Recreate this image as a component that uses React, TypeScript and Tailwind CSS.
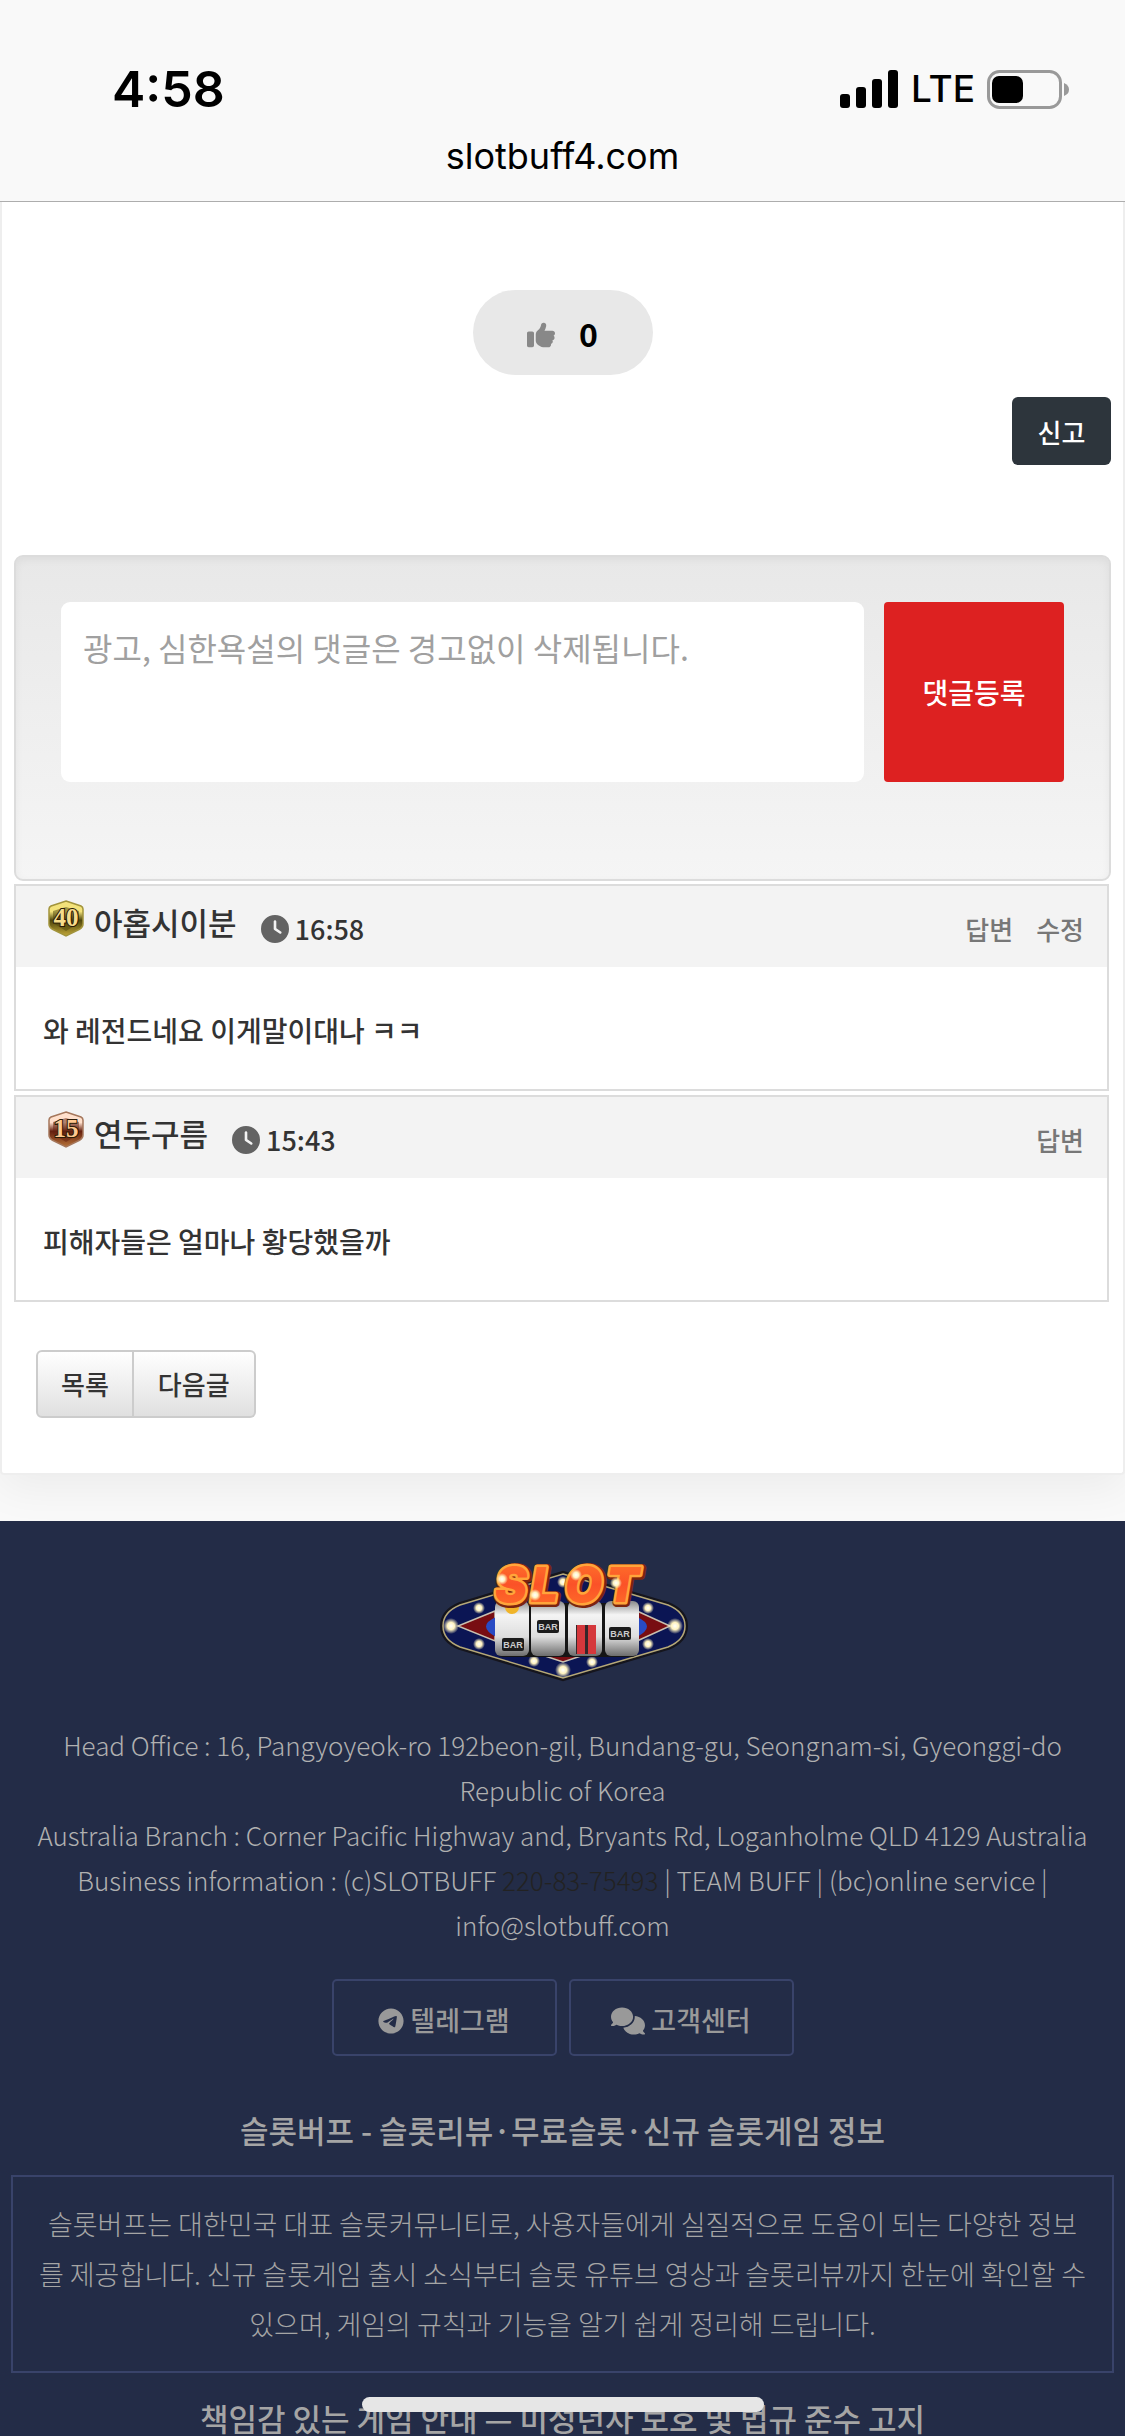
import { useState } from 'react'
import { FaClock, FaComments, FaTelegram, FaThumbsUp } from 'react-icons/fa6'

type Comment = {
  id: number
  level: number
  tone: 'gold' | 'bronze'
  name: string
  time: string
  text: string
  actions: string[]
}

const comments: Comment[] = [
  { id: 1, level: 40, tone: 'gold', name: '아홉시이분', time: '16:58', text: '와 레전드네요 이게말이대나 ㅋㅋ', actions: ['답변', '수정'] },
  { id: 2, level: 15, tone: 'bronze', name: '연두구름', time: '15:43', text: '피해자들은 얼마나 황당했을까', actions: ['답변'] },
]

const badgeColors = {
  gold: { top: '#f3e27a', mid: '#4d450c', bottom: '#c4a838', edge: '#a2943c', text: '#f6dc8c' },
  bronze: { top: '#ffe0cc', mid: '#64200f', bottom: '#b87338', edge: '#a5775c', text: '#ffc890' },
}

function StatusBar() {
  return (
    <header className="relative z-10 border-b border-[#adadad] bg-[#f9f9f9] font-['Inter',sans-serif] text-black">
      <div className="flex items-center justify-between pt-[64px] pr-[56px] pl-[112px]">
        <span className="text-[50px] leading-[50px] font-semibold">4:58</span>
        <div className="flex items-center">
          <svg width="59" height="38" viewBox="0 0 59 38" aria-hidden="true">
            <rect x="0" y="24" width="10" height="14" rx="3" />
            <rect x="16" y="17" width="10" height="21" rx="3" />
            <rect x="32" y="9" width="10" height="29" rx="3" />
            <rect x="48" y="0" width="10" height="38" rx="3" />
          </svg>
          <span className="ml-3 text-[37px] leading-[50px] font-medium">LTE</span>
          <svg className="ml-3" width="82" height="39" viewBox="0 0 82 39" aria-hidden="true">
            <rect x="1.5" y="1.5" width="72" height="36" rx="11" fill="none" stroke="#999" strokeWidth="3" />
            <rect x="5" y="6" width="31" height="27" rx="7" />
            <path d="M77 13q5 2 5 6.500t-5 6.500z" fill="#999" />
          </svg>
        </div>
      </div>
      <p className="pt-[20px] pb-[22px] text-center text-[36px] leading-[45px]">slotbuff4.com</p>
    </header>
  )
}

function LevelBadge({ level, tone }: { level: number; tone: 'gold' | 'bronze' }) {
  const c = badgeColors[tone]
  return (
    <svg width="36" height="38" viewBox="0 0 36 38" role="img" aria-label={`레벨 ${level}`}>
      <defs>
        <linearGradient id={`badge-${tone}`} x1="0" y1="0" x2="0" y2="1">
          <stop offset="0" stopColor={c.top} />
          <stop offset=".3" stopColor={c.top} />
          <stop offset=".55" stopColor={c.mid} />
          <stop offset="1" stopColor={c.bottom} />
        </linearGradient>
      </defs>
      <path d="M18 1 33 6q2 1 2 3v15q0 3-3 5L18 36 4 29q-3-2-3-5V9q0-2 2-3z" fill={`url(#badge-${tone})`} stroke={c.edge} strokeWidth="1.500" />
      <path d="M18 7 31 11v12L18 31 5 23V11z" fill={c.mid} fillOpacity=".5" />
      <text
        x="18"
        y="26"
        textAnchor="middle"
        fontFamily="Liberation Serif, serif"
        fontSize="25"
        fontWeight="700"
        fill={c.text}
        stroke="#2a1a05"
        strokeWidth="2"
        paintOrder="stroke"
      >
        {level}
      </text>
    </svg>
  )
}

function CommentItem({ comment }: { comment: Comment }) {
  return (
    <li className="mr-[2px] border-2 border-[#dcdcdc] bg-white">
      <div className="flex h-[81px] items-start bg-[#f3f3f3] pt-[14px] pr-[23px] pl-[32px] font-medium">
        <LevelBadge level={comment.level} tone={comment.tone} />
        <span className="ml-[10px] text-[31px] leading-[44px]">{comment.name}</span>
        <span className="mt-[8px] ml-[24px] flex items-center gap-1.5 text-[27px] leading-[42px]">
          <FaClock size={28} className="text-[#636363]" />
          {comment.time}
        </span>
        <span className="mt-[8px] ml-auto flex gap-[23px] text-[26px] leading-[42px] text-[#777]">
          {comment.actions.map((action) => (
            <button key={action} type="button">{action}</button>
          ))}
        </span>
      </div>
      <p className="px-[27px] pt-[42px] pb-[38px] text-[28px] leading-[42px] font-medium">{comment.text}</p>
    </li>
  )
}

const plate = 'M143 33 248 64q17 7 17 21t-17 21L143 137 40 106Q23 99 23 85t17-21z'

const bulbs = [
  [31, 85], [59, 67], [59, 103], [114, 120], [143, 129], [172, 121], [228, 67], [228, 103], [255, 85], [143, 41],
]

const sparkles = [[82, 38], [115, 54], [156, 34], [196, 42]]

function Logo() {
  return (
    <svg width="264" height="140" viewBox="11 10 264 140" role="img" aria-label="SLOT">
      <defs>
        <linearGradient id="reel" x1="0" y1="0" x2="0" y2="1">
          <stop offset="0" stopColor="#8a8a8a" />
          <stop offset=".25" stopColor="#f4f4f4" />
          <stop offset=".65" stopColor="#dedede" />
          <stop offset="1" stopColor="#6d6d6d" />
        </linearGradient>
        <linearGradient id="flame" x1="0" y1="0" x2="0" y2="1">
          <stop offset="0" stopColor="#ff7a2a" />
          <stop offset=".5" stopColor="#fb5228" />
          <stop offset="1" stopColor="#ff7428" />
        </linearGradient>
        <radialGradient id="bulb">
          <stop offset="0" stopColor="#fff" />
          <stop offset=".45" stopColor="#fff3c0" />
          <stop offset="1" stopColor="#fff3c0" stopOpacity="0" />
        </radialGradient>
      </defs>
      <path d={plate} fill="#0b1554" stroke="#15151d" strokeWidth="6" />
      <path d={plate} fill="#0b1554" stroke="#b5a878" strokeWidth="1.500" />
      <path d="M75 70 38 85l37 15zM217 70l33 15-33 15zM125 115h36l-18 6z" fill="#780d12" stroke="#c9c0b0" strokeWidth="1.500" />
      {bulbs.map(([x, y]) => (
        <circle key={`${x}-${y}`} cx={x} cy={y} r={x === 31 || x === 255 || y === 129 ? 8 : 6} fill="url(#bulb)" />
      ))}
      <path d="M76 76q-20 9 0 20zM217 76q20 9 0 20z" fill="#294bc4" />
      <rect x="75" y="62" width="144" height="54" rx="8" fill="#151515" />
      {[75, 111, 148, 185].map((x) => (
        <rect key={x} x={x} y="60" width="34" height="55" rx="6" fill="url(#reel)" />
      ))}
      <circle cx="92" cy="66" r="7" fill="#f0b429" />
      <g fill="#1c1c1c">
        <rect x="82" y="97" width="22" height="13" rx="2" />
        <rect x="117" y="79" width="22" height="13" rx="2" />
        <rect x="189" y="86" width="22" height="13" rx="2" />
      </g>
      <g fill="#ccc" fontFamily="Liberation Sans, sans-serif" fontSize="9" fontWeight="700" textAnchor="middle">
        <text x="93" y="107">BAR</text>
        <text x="128" y="89">BAR</text>
        <text x="200" y="96">BAR</text>
      </g>
      <path d="M156 84h20v29h-20z" fill="#35272a" />
      <path d="M157 84h8v29h-8zM168 84h8v29h-8z" fill="#d5383c" />
      <g fontFamily="Inter, sans-serif" fontSize="48" fontStyle="italic" fontWeight="900" strokeLinejoin="round" paintOrder="stroke">
        <text x="76 112 146 187" y="62" fill="#7c250f" stroke="#7c250f" strokeWidth="8">SLOT</text>
        <text x="75 111 145 186" y="61" fill="url(#flame)" stroke="#ffa53a" strokeWidth="5" aria-hidden="true">SLOT</text>
      </g>
      <g fill="url(#bulb)">
        {sparkles.map(([x, y]) => (
          <circle key={x} cx={x} cy={y} r="6" />
        ))}
      </g>
    </svg>
  )
}

function Footer() {
  return (
    <footer className="relative bg-[#232c47] px-[11px] text-center text-[#a5a5a5]">
      <div className="flex justify-center pt-[30px]">
        <Logo />
      </div>
      <address className="mt-[31px] text-[26px] leading-[45px] font-light text-[#b0b0b0] not-italic">
        Head Office : 16, Pangyoyeok-ro 192beon-gil, Bundang-gu, Seongnam-si, Gyeonggi-do
        <br />
        Republic of Korea
        <br />
        Australia Branch : Corner Pacific Highway and, Bryants Rd, Loganholme QLD 4129 Australia
        <br />
        Business information : (c)SLOTBUFF <a href="tel:220-83-75493" className="text-[#222]">220-83-75493</a> | TEAM BUFF | (bc)online service |
        <br />
        info@slotbuff.com
      </address>
      <div className="mt-[32px] flex justify-center gap-3 text-[27px] font-medium text-[#999]">
        <a href="#telegram" className="flex h-[77px] w-[225px] items-center justify-center gap-1.5 rounded-[5px] border-2 border-[#39436a] pt-[6px]">
          <FaTelegram size={26} />
          텔레그램
        </a>
        <a href="#support" className="flex h-[77px] w-[225px] items-center justify-center gap-1.5 rounded-[5px] border-2 border-[#39436a] pt-[6px]">
          <FaComments size={34} />
          고객센터
        </a>
      </div>
      <h2 className="mt-[51px] text-[31px] leading-[46px] font-medium">슬롯버프 - 슬롯리뷰·무료슬롯·신규 슬롯게임 정보</h2>
      <p className="mt-[22px] border-2 border-[#39436a] px-[25px] py-[22px] text-[27px] leading-[50px] font-light">
        슬롯버프는 대한민국 대표 슬롯커뮤니티로, 사용자들에게 실질적으로 도움이 되는 다양한 정보를 제공합니다. 신규 슬롯게임 출시 소식부터 슬롯 유튜브 영상과 슬롯리뷰까지 한눈에 확인할 수 있으며, 게임의 규칙과 기능을 알기 쉽게 정리해 드립니다.
      </p>
      <h2 className="mt-[26px] text-[31px] leading-[38px] font-medium">책임감 있는 게임 안내 — 미성년자 보호 및 법규 준수 고지</h2>
    </footer>
  )
}

export default function App() {
  const [likes, setLikes] = useState(0)
  const [text, setText] = useState('')

  return (
    <div className="bg-[#f9f9f9] font-['Noto_Sans_CJK_KR',sans-serif] text-[#333]">
      <StatusBar />

      <main className="mb-[46px] rounded-b-[4px] border-x-2 border-b-2 border-[#eee] bg-white px-[12px] pt-[88px] pb-[55px] shadow-[0_12px_45px_rgba(0,0,0,0.06)]">
        {/* Like + report */}
        <div className="flex justify-center">
          <button
            type="button"
            aria-label="추천"
            onClick={() => setLikes(likes + 1)}
            className="flex h-[85px] w-[180px] items-center justify-center gap-6 rounded-full bg-[#e8e8e8] text-[32px] font-bold text-black"
          >
            <FaThumbsUp size={28} className="mt-1 text-[#888]" />
            {likes}
          </button>
        </div>
        <div className="mt-[22px] flex justify-end">
          <button type="button" className="h-[68px] w-[99px] rounded-[6px] bg-[#2d353c] text-[26px] font-medium text-white">신고</button>
        </div>

        {/* Comment form */}
        <form
          onSubmit={(e) => e.preventDefault()}
          className="mt-[90px] flex gap-5 rounded-[9px] border-2 border-[#dcdcdc] bg-linear-to-b from-[#e8e8e8] to-[#f5f5f5] px-[45px] pt-[45px] pb-[97px] shadow-[inset_0_3px_9px_rgba(0,0,0,0.05)]"
        >
          <textarea
            aria-label="댓글 내용"
            value={text}
            onChange={(e) => setText(e.target.value)}
            placeholder="광고, 심한욕설의 댓글은 경고없이 삭제됩니다."
            className="h-[180px] min-w-0 flex-1 resize-none rounded-[9px] bg-white px-[22px] pt-[22px] text-[32px] leading-[46px] outline-none placeholder:text-[#a0a0a0]"
          />
          <button type="submit" className="h-[180px] w-[180px] rounded-[4px] bg-[#dd2121] text-[28px] font-medium text-white">댓글등록</button>
        </form>

        {/* Comments */}
        <ul className="mt-[3px] flex flex-col gap-1">
          {comments.map((comment) => (
            <CommentItem key={comment.id} comment={comment} />
          ))}
        </ul>

        <div className="mt-[48px] ml-[22px] flex text-[26px] leading-[40px] font-medium">
          <a href="#list" className="rounded-l-[6px] border-2 border-[#ccc] bg-linear-to-b from-white to-[#e0e0e0] px-[23px] py-[12px]">목록</a>
          <a href="#next" className="rounded-r-[6px] border-2 border-l-0 border-[#ccc] bg-linear-to-b from-white to-[#e0e0e0] px-[24px] py-[12px]">다음글</a>
        </div>
      </main>

      <Footer />

      {/* Home indicator */}
      <div className="fixed bottom-[24px] left-1/2 h-[15px] w-[402px] -translate-x-1/2 rounded-full bg-[#e6e6e6]" />
    </div>
  )
}
